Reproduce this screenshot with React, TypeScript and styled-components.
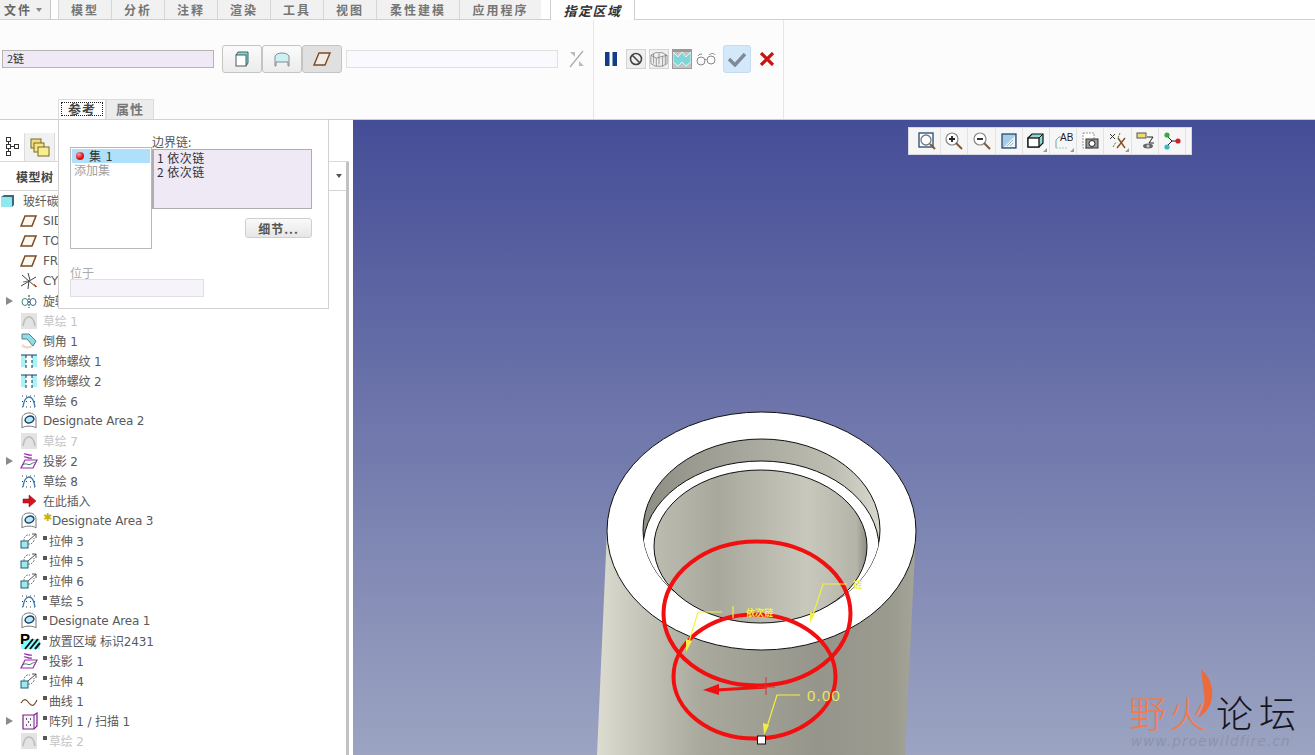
import React from "react";
import styled, { createGlobalStyle } from "styled-components";

const Global = createGlobalStyle`
  html, body { margin: 0; padding: 0; width: 1315px; height: 755px; overflow: hidden; background: #fff; }
  * { box-sizing: border-box; }
  body { font-family: "DejaVu Sans", "Noto Sans CJK SC", sans-serif; font-size: 12px; color: #555; }
`;

const Page = styled.div`
  position: relative;
  width: 1315px;
  height: 755px;
  display: flex;
  flex-direction: column;
  overflow: hidden;
`;

const TabBar = styled.div`
  height: 20px;
  display: flex;
  align-items: stretch;
  background: #fff;
  border-bottom: 1px solid #cfcfcf;
`;
const FileTab = styled.div`
  width: 51px;
  display: flex;
  align-items: center;
  justify-content: flex-start;
  gap: 4px;
  padding-left: 4px;
  background: #f1f1f1;
  border-right: 1px solid #c8c8c8;
  font: bold 12px "Noto Sans CJK SC", sans-serif;
  letter-spacing: 2px;
  color: #666;
  margin-right: 7px;
  &::after {
    content: "";
    border-left: 3px solid transparent;
    border-right: 3px solid transparent;
    border-top: 4px solid #888;
  }
`;
const Tab = styled.div<{ $w: number }>`
  width: ${(p) => p.$w}px;
  display: flex;
  align-items: center;
  justify-content: center;
  background: #f1f1f1;
  border-left: 1px solid #d6d6d6;
  font: bold 12px "Noto Sans CJK SC", sans-serif;
  letter-spacing: 2px;
  color: #757575;
  &:last-of-type { border-right: 1px solid #c8c8c8; }
`;
const ActiveTab = styled.div`
  width: 85px;
  height: 20px;
  margin-left: 9px;
  display: flex;
  align-items: center;
  justify-content: center;
  background: #fff;
  border-left: 1px solid #cfcfcf;
  border-right: 1px solid #cfcfcf;
  font: italic bold 13px "Noto Sans CJK SC", sans-serif;
  letter-spacing: 1.5px;
  color: #333;
`;

const Ribbon = styled.div`
  height: 100px;
  display: flex;
  background: #fcfcfc;
  border-bottom: 1px solid #cdcdcd;
`;
const MainGroup = styled.div`
  width: 594px;
  display: flex;
  flex-direction: column;
  justify-content: space-between;
  border-right: 1px solid #e6e6e6;
`;
const Controls = styled.div`
  height: 53px;
  padding: 25px 0 0 2px;
  display: flex;
  align-items: center;
`;
const ChainInput = styled.div`
  width: 212px;
  height: 18px;
  background: #efe9f6;
  border: 1px solid #b4b4b4;
  font: 11px "Noto Sans CJK SC", sans-serif;
  line-height: 15px;
  padding-left: 4px;
  color: #333;
  margin-right: 8px;
`;
const ToggleGroup = styled.div`
  display: flex;
  margin-right: 4px;
`;
const ToggleButton = styled.div<{ $on?: boolean }>`
  width: 40px;
  height: 28px;
  display: flex;
  align-items: center;
  justify-content: center;
  border: 1px solid #c4c4c4;
  border-radius: 3px;
  background: ${(p) => (p.$on ? "#e0e0e0" : "linear-gradient(#fbfbfb, #ececec)")};
`;
const EmptyInput = styled.div`
  width: 212px;
  height: 18px;
  background: #faf9fd;
  border: 1px solid #e0e0e0;
  margin-right: 10px;
`;
const SubTabs = styled.div`
  display: flex;
  margin-left: 58px;
  height: 20px;
`;
const SubTab = styled.div<{ $on?: boolean }>`
  width: 48px;
  padding-bottom: 3px;
  display: flex;
  align-items: center;
  justify-content: center;
  border: 1px solid #dcdcdc;
  border-bottom: 0;
  background: ${(p) => (p.$on ? "#fff" : "#ececec")};
  font: bold 13px "Noto Sans CJK SC", sans-serif;
  letter-spacing: 1px;
  color: ${(p) => (p.$on ? "#444" : "#777")};
`;
const FocusLabel = styled.span`
  width: 42px;
  height: 14px;
  margin-top: 2px;
  border: 1px dotted #222;
  line-height: 12px;
  text-align: center;
  display: block;
`;
const ActionGroup = styled.div`
  width: 190px;
  padding: 25px 0 47px 11px;
  display: flex;
  align-items: center;
  gap: 3px;
  border-right: 1px solid #e6e6e6;
`;
const ActionBox = styled.div<{ $pressed?: boolean; $plain?: boolean; $w?: number; $gap?: number }>`
  width: ${(p) => p.$w ?? 20}px;
  height: 20px;
  margin-left: ${(p) => p.$gap ?? 0}px;
  display: flex;
  align-items: center;
  justify-content: center;
  border: ${(p) => (p.$plain ? "0" : p.$pressed ? "1px solid #9a9a9a" : "1px solid #d4d4d4")};
  border-top-width: ${(p) => (p.$pressed ? 3 : p.$plain ? 0 : 1)}px;
  background: ${(p) => (p.$pressed ? "#c4c4c4" : p.$plain ? "transparent" : "#efefef")};
`;
const OkButton = styled.div`
  width: 28px;
  height: 28px;
  margin: 0 5px 0 3px;
  flex: none;
  display: flex;
  align-items: center;
  justify-content: center;
  border: 1px solid #c3dcef;
  border-radius: 3px;
  background: #d3e8f8;
`;

const Main = styled.div`
  height: 635px;
  display: flex;
`;
const TreePanel = styled.div`
  width: 353px;
  display: flex;
  flex-direction: column;
  background: #fff;
`;
const NavTabs = styled.div`
  height: 42px;
  margin-right: 4px;
  padding-top: 13px;
  display: flex;
  align-items: stretch;
  background: #fff;
  border-bottom: 1px solid #dadada;
`;
const NavTab = styled.div<{ $on?: boolean }>`
  width: ${(p) => (p.$on ? 25 : 30)}px;
  display: flex;
  align-items: center;
  justify-content: center;
  background: ${(p) => (p.$on ? "#fff" : "#f1f1f1")};
  border-right: 1px solid #dadada;
`;
const TreeBody = styled.div`
  flex: 1;
  display: flex;
  min-height: 0;
`;
const TreeColumn = styled.div`
  width: 346px;
  display: flex;
  flex-direction: column;
  min-width: 0;
`;
const TreeHeader = styled.div`
  height: 29px;
  padding-left: 16px;
  display: flex;
  align-items: center;
  justify-content: space-between;
  border-bottom: 1px solid #d4d4d4;
  font: bold 12px "Noto Sans CJK SC", sans-serif;
  letter-spacing: 0.5px;
  color: #444;
`;
const HeaderMenu = styled.span`
  width: 0;
  height: 0;
  margin-right: 4px;
  border-left: 3px solid transparent;
  border-right: 3px solid transparent;
  border-top: 4px solid #555;
`;
const Rows = styled.div`
  display: flex;
  flex-direction: column;
`;
const Row = styled.div<{ $off?: boolean }>`
  height: 20px;
  display: flex;
  align-items: center;
  white-space: nowrap;
  color: ${(p) => (p.$off ? "#c4c4c4" : "#5a5a5a")};
  font-size: 12px;
  letter-spacing: -0.15px;
`;
const Label = styled.span<{ $cjk: boolean }>`
  padding-bottom: ${(p) => (p.$cjk ? 2 : 0)}px;
`;
const Expand = styled.span<{ $show?: boolean }>`
  width: 20px;
  padding-left: 6px;
  flex: none;
  &::before {
    content: "";
    display: ${(p) => (p.$show ? "block" : "none")};
    width: 0;
    height: 0;
    border-top: 4px solid transparent;
    border-bottom: 4px solid transparent;
    border-left: 7px solid #8a8a8a;
  }
`;
const RowIcon = styled.span`
  width: 23px;
  flex: none;
  display: flex;
  align-items: center;
`;
const Star = styled.span`
  width: 9px;
  flex: none;
  align-self: flex-start;
  margin-top: 1px;
  font-size: 11px;
  line-height: 11px;
  color: #c8b400;
`;
const Mark = styled.span`
  width: 6px;
  flex: none;
  align-self: flex-start;
  margin-top: 5px;
  &::before {
    content: "";
    display: block;
    width: 4px;
    height: 4px;
    background: #555;
  }
`;
const Scroll = styled.div`
  width: 3px;
  background: #c2c2c2;
`;

const Viewport = styled.div`
  position: relative;
  flex: 1;
  background: linear-gradient(#454d97, #9ca4c2);
  overflow: hidden;
`;
const Scene = styled.svg`
  position: absolute;
  inset: 0;
  width: 962px;
  height: 635px;
`;
const ViewBar = styled.div`
  position: absolute;
  left: 555px;
  top: 7px;
  width: 284px;
  height: 28px;
  display: flex;
  align-items: center;
  padding: 0 5px;
  background: #f6f6f6;
  border: 1px solid #d8d8e2;
`;
const ViewCell = styled.div<{ $corner?: boolean }>`
  position: relative;
  width: 27.3px;
  height: 26px;
  display: flex;
  align-items: center;
  justify-content: center;
  border-right: 1px solid #e2e2e2;
  &::after {
    content: "";
    display: ${(p) => (p.$corner ? "block" : "none")};
    position: absolute;
    right: 2px;
    bottom: 2px;
    border-left: 4px solid transparent;
    border-bottom: 4px solid #999;
  }
`;
const Watermark = styled.div`
  position: absolute;
  left: 776px;
  top: 572px;
  width: 185px;
  font-family: "Noto Sans CJK SC", sans-serif;
  font-size: 37px;
  line-height: 40px;
  letter-spacing: 3px;
  white-space: nowrap;
`;
const Fire = styled.span`
  color: #f27a4c;
  font-weight: 300;
`;
const Forum = styled.span`
  color: #15151c;
  margin-left: 7px;
  letter-spacing: 6px;
  font-weight: 300;
`;
const Flame = styled.svg`
  position: absolute;
  left: 64px;
  top: -23px;
  width: 22px;
  height: 50px;
`;
const Site = styled.div`
  font: italic 13.5px "DejaVu Sans", sans-serif;
  letter-spacing: 1.2px;
  line-height: 16px;
  margin: 1px 0 0 2px;
  color: #8c92ac;
`;

const Popup = styled.div`
  position: absolute;
  left: 58px;
  top: 119px;
  width: 271px;
  height: 190px;
  padding: 16px 16px 0 11px;
  background: #fff;
  border: 1px solid #d2d2d2;
  font-family: "Noto Sans CJK SC", sans-serif;
`;
const PopTop = styled.div`
  display: flex;
`;
const SetList = styled.div`
  width: 82px;
  height: 102px;
  margin-top: 11px;
  padding: 1px 1px;
  border: 1px solid #b8b8b8;
  background: #fff;
`;
const SetRow = styled.div`
  height: 14px;
  padding-left: 4px;
  display: flex;
  align-items: center;
  gap: 5px;
  background: #aee0fb;
  color: #333;
  font-size: 12px;
  line-height: 14px;
  letter-spacing: 1px;
`;
const AddSet = styled.div`
  padding-left: 2px;
  line-height: 14px;
  color: #a0a0a0;
  font-size: 12px;
`;
const RedDot = styled.span`
  width: 8px;
  height: 8px;
  border-radius: 50%;
  background: radial-gradient(circle at 35% 30%, #ff9a9a, #d40f0f 60%);
`;
const ChainColumn = styled.div`
  flex: 1;
  display: flex;
  flex-direction: column;
`;
const ChainLabel = styled.div`
  height: 13px;
  line-height: 12px;
  font-size: 12px;
  color: #555;
`;
const ChainBox = styled.div`
  height: 60px;
  padding: 1px 0 0 3px;
  margin-bottom: 9px;
  background: #efe9f6;
  border: 1px solid #aeaeae;
  border-left-width: 2px;
  font-size: 12px;
  line-height: 14px;
  letter-spacing: 0.5px;
  color: #333;
`;
const DetailButton = styled.div`
  width: 67px;
  height: 20px;
  align-self: flex-end;
  display: flex;
  align-items: center;
  justify-content: center;
  background: linear-gradient(#fafafa, #e6e6e6);
  border: 1px solid #cfcfcf;
  border-radius: 3px;
  font-weight: bold;
  font-size: 12px;
  letter-spacing: 1px;
  color: #555;
`;
const AtLabel = styled.div`
  margin-top: 17px;
  height: 13px;
  line-height: 14px;
  color: #aaa;
  font-size: 12px;
`;
const AtInput = styled.div`
  width: 134px;
  height: 18px;
  background: #f6f4fa;
  border: 1px solid #e0e0e0;
`;

type IconName = "plane" | "csys" | "revolve" | "sketchOff" | "chamfer" | "thread" | "sketch" | "area" | "project" | "insert" | "extrude" | "place" | "curve" | "pattern";

const TreeIcon = ({ name }: { name: IconName }) => {
  const s = { width: 18, height: 18, viewBox: "0 0 18 18", fill: "none" } as const;
  switch (name) {
    case "plane":
      return <svg {...s}><path d="M5 4h11l-4 10H1z" stroke="#7a4a24" strokeWidth="1.5" fill="#fdf8ef" /></svg>;
    case "csys":
      return <svg {...s}><path d="M8 1l2 7M2 3l14 12M1 14l15-9M9 8l-1 9" stroke="#444" strokeWidth="1" /><path d="M8 9l-5 1M14 12l3 3" stroke="#c0572a" strokeWidth="1" /></svg>;
    case "revolve":
      return <svg {...s}><ellipse cx="5" cy="10" rx="3" ry="3.5" stroke="#3a8a7e" /><ellipse cx="13" cy="10" rx="3" ry="3.5" stroke="#3a6a9a" /><path d="M9 3v13" stroke="#222" strokeDasharray="2 1" /></svg>;
    case "sketchOff":
      return <svg {...s}><rect x="1" y="1" width="16" height="16" fill="#e3e3e3" /><path d="M3 14c1-7 3-9 6-9s5 2 6 9" stroke="#bcbcbc" strokeWidth="1.5" /></svg>;
    case "chamfer":
      return <svg {...s}><path d="M2 2h7l7 7-3 5-6-7H2z" fill="#8fdde8" stroke="#5a7f8a" /><path d="M2 13c3 3 7 3 10 1" stroke="#eadccc" strokeWidth="2.5" /></svg>;
    case "thread":
      return <svg {...s}><rect x="1" y="3" width="16" height="12" fill="#a8f2f8" /><rect x="6" y="3" width="6" height="12" fill="#fff" /><path d="M1 3h16" stroke="#1d3d66" /><path d="M6 3v13M12 3v13" stroke="#1d2d4d" strokeDasharray="3 2" /></svg>;
    case "sketch":
      return <svg {...s}><path d="M2 4h14M2 9.500h14M2 15h14" stroke="#445" strokeDasharray="1 3" /><path d="M3 15c1-7 3-10 6-10s5 3 6 10" stroke="#2a7ab8" strokeWidth="1.3" /></svg>;
    case "area":
      return <svg {...s}><path d="M2 16V7c0-4 3-6 7-6s7 2 7 6v9" stroke="#777" fill="#fff" /><path d="M2 16c2-2.500 12-2.500 14 0" stroke="#777" /><ellipse cx="9.500" cy="7.500" rx="4.500" ry="3.300" transform="rotate(-20 9.500 7.500)" stroke="#17406e" strokeWidth="1.5" fill="#b8e8f2" /></svg>;
    case "project":
      return <svg {...s}><path d="M5 8h12l-4 8H1z" stroke="#9a2ab0" strokeWidth="1.2" fill="#fff" /><path d="M3 13c3-3 5 1 8-1s3-1 4-2" stroke="#3a7a5a" /><path d="M4 2c2-1 4 2 8 1M4 5c2-1 4 2 8 1" stroke="#9a2ab0" strokeWidth="1.2" /></svg>;
    case "insert":
      return <svg {...s}><path d="M3 7h6V3l7 6-7 6v-4H3z" fill="#d8121a" stroke="#7a0a10" strokeWidth=".5" /></svg>;
    case "extrude":
      return <svg {...s}><rect x="1" y="9" width="7" height="7" fill="#9fe8ee" stroke="#1f5f7a" /><path d="M4 9V6l3-3h3M8 12h3l3-3V6" stroke="#777" strokeDasharray="2 1" /><path d="M8 9l8-7M12 2h4v4" stroke="#555" /></svg>;
    case "place":
      return <svg width="22" height="20" viewBox="0 0 22 20" fill="none"><rect x="1" y="8" width="19" height="10" fill="#8ff" /><path d="M5 18l8-10M10 18l8-10M15 18l5-6" stroke="#111" strokeWidth="2" /><text x="0" y="13" fontFamily="Liberation Sans" fontWeight="bold" fontSize="15" fill="#000">P</text></svg>;
    case "curve":
      return <svg {...s}><path d="M1 11c3-5 5-4 8 0s5 3 8-3" stroke="#7a4a24" strokeWidth="1.2" /></svg>;
    case "pattern":
      return <svg {...s}><path d="M3 3h11l3-2v13l-3 3H3z" stroke="#7a1f8a" strokeWidth="1.2" fill="#f8f4fb" /><path d="M14 3v14" stroke="#7a1f8a" /><path d="M6 7h1M10 7h1M8 10h1M6 13h1M10 13h1" stroke="#333" strokeWidth="1.4" /></svg>;
  }
};

type Item = { icon: IconName; label: string; expand?: boolean; off?: boolean; mark?: boolean; star?: boolean };
const items: Item[] = [
  { icon: "plane", label: "SIDE" },
  { icon: "plane", label: "TOP" },
  { icon: "plane", label: "FRONT" },
  { icon: "csys", label: "CYS" },
  { icon: "revolve", label: "旋转 1", expand: true },
  { icon: "sketchOff", label: "草绘 1", off: true },
  { icon: "chamfer", label: "倒角 1" },
  { icon: "thread", label: "修饰螺纹 1" },
  { icon: "thread", label: "修饰螺纹 2" },
  { icon: "sketch", label: "草绘 6" },
  { icon: "area", label: "Designate Area 2" },
  { icon: "sketchOff", label: "草绘 7", off: true },
  { icon: "project", label: "投影 2", expand: true },
  { icon: "sketch", label: "草绘 8" },
  { icon: "insert", label: "在此插入" },
  { icon: "area", label: "Designate Area 3", star: true },
  { icon: "extrude", label: "拉伸 3", mark: true },
  { icon: "extrude", label: "拉伸 5", mark: true },
  { icon: "extrude", label: "拉伸 6", mark: true },
  { icon: "sketch", label: "草绘 5", mark: true },
  { icon: "area", label: "Designate Area 1", mark: true },
  { icon: "place", label: "放置区域 标识2431", mark: true },
  { icon: "project", label: "投影 1", mark: true },
  { icon: "extrude", label: "拉伸 4", mark: true },
  { icon: "curve", label: "曲线 1", mark: true },
  { icon: "pattern", label: "阵列 1 / 扫描 1", mark: true, expand: true },
  { icon: "sketchOff", label: "草绘 2", mark: true, off: true },
];

const tabs: [string, number][] = [
  ["模型", 53], ["分析", 53], ["注释", 53], ["渲染", 53], ["工具", 53], ["视图", 53], ["柔性建模", 83], ["应用程序", 82],
];

const V = { width: 20, height: 20, viewBox: "0 0 20 20", fill: "none" } as const;
const viewIcons: { node: React.ReactNode; corner?: boolean }[] = [
  { node: <svg {...V}><rect x="2" y="2" width="14" height="14" stroke="#1d4a6e" strokeWidth="1.3" fill="#fff" /><circle cx="9" cy="9" r="5" stroke="#777" strokeWidth="1.3" /><path d="M13 13l5 5" stroke="#7a5a3a" strokeWidth="2" /></svg> },
  { node: <svg {...V}><circle cx="8" cy="8" r="6" stroke="#888" strokeWidth="1.2" fill="#fff" /><path d="M5 8h6M8 5v6" stroke="#222" strokeWidth="1.8" /><path d="M12 12l6 6" stroke="#7a5a3a" strokeWidth="2" /></svg> },
  { node: <svg {...V}><circle cx="8" cy="8" r="6" stroke="#888" strokeWidth="1.2" fill="#fff" /><path d="M5 8h6" stroke="#222" strokeWidth="1.8" /><path d="M12 12l6 6" stroke="#7a5a3a" strokeWidth="2" /></svg> },
  { node: <svg {...V}><rect x="3" y="3" width="14" height="14" fill="#a8cce8" stroke="#16406a" strokeWidth="1.2" /><path d="M5 16L16 5v11z" fill="#e8f2fa" /><path d="M8 15l6-6M11 15l3-3" stroke="#8aa" strokeWidth=".8" /></svg> },
  { node: <svg {...V}><path d="M2 7l4-4h11v9l-4 4H2z" fill="#8fd8d0" stroke="#111" strokeWidth="1.2" /><rect x="2" y="7" width="11" height="9" fill="#fff" stroke="#111" strokeWidth="1.3" /><path d="M13 7l4-4" stroke="#111" /></svg>, corner: true },
  { node: <svg {...V}><path d="M3 17V9l3-3h2" stroke="#6aa" fill="none" /><path d="M3 17h12" stroke="#9cc" strokeDasharray="2 1" /><text x="7" y="10" fontFamily="Liberation Sans" fontSize="10" fill="#222">AB</text></svg>, corner: true },
  { node: <svg {...V}><rect x="3" y="2" width="11" height="15" stroke="#999" strokeDasharray="2 1" fill="#fff" /><rect x="6" y="8" width="12" height="9" fill="#999" stroke="#333" /><circle cx="12" cy="12.500" r="3" fill="#fff" stroke="#222" /></svg> },
  { node: <svg {...V}><path d="M2 3l5 5M7 3L2 8" stroke="#333" /><path d="M12 2l-2 5M5 16l3-5" stroke="#3a8a3a" strokeDasharray="2 1" /><path d="M10 7l7 10M17 7l-8 10" stroke="#8a4a1a" strokeWidth="1.4" /></svg>, corner: true },
  { node: <svg {...V}><rect x="2" y="2" width="9" height="5" fill="#eedc70" stroke="#555" /><path d="M12 6h6l-4 6h5" stroke="#222" /><ellipse cx="13" cy="15" rx="5" ry="2.500" fill="#666" /><circle cx="13" cy="15" r="1.500" fill="#ccc" /></svg> },
  { node: <svg {...V}><path d="M5 5l5 5h7M10 10l-5 5" stroke="#222" /><circle cx="5" cy="4" r="2.600" fill="#3aa84a" /><circle cx="16" cy="10" r="2.600" fill="#d02030" /><circle cx="5" cy="16" r="2.600" fill="#38b8c8" /></svg> },
];

const Yellow = "#f4f040";
const RingRed = "#f20f0f";

export default function App() {
  return (
    <Page>
      <Global />
      <TabBar>
        <FileTab>文件</FileTab>
        {tabs.map(([t, w]) => <Tab key={t} $w={w}>{t}</Tab>)}
        <ActiveTab>指定区域</ActiveTab>
      </TabBar>
      <Ribbon>
        <MainGroup>
          <Controls>
            <ChainInput>2链</ChainInput>
            <ToggleGroup>
              <ToggleButton>
                <svg width="18" height="18" viewBox="0 0 18 18" fill="none"><path d="M3 5l2-3h10v11l-2 3z" fill="#7fd8cc" stroke="#3a6a72" /><rect x="3" y="5" width="10" height="11" fill="#fff" stroke="#4a5a62" /></svg>
              </ToggleButton>
              <ToggleButton>
                <svg width="18" height="18" viewBox="0 0 18 18" fill="none"><path d="M2 16V6c2-4 12-4 14 0v10h-1V12H3v4z" fill="#cdf0f2" stroke="#889" /></svg>
              </ToggleButton>
              <ToggleButton $on>
                <svg width="20" height="18" viewBox="0 0 20 18" fill="none"><path d="M7 3h11l-5 12H2z" stroke="#7a4a24" strokeWidth="1.400" fill="#f2ece4" /></svg>
              </ToggleButton>
            </ToggleGroup>
            <EmptyInput />
            <svg width="18" height="20" viewBox="0 0 18 20" fill="none"><path d="M15 2L2 18" stroke="#aaa" strokeWidth="1.200" /><path d="M2 3h5v5zM16 17h-5v-5z" fill="#bbb" /></svg>
          </Controls>
          <SubTabs>
            <SubTab $on><FocusLabel>参考</FocusLabel></SubTab>
            <SubTab>属性</SubTab>
          </SubTabs>
        </MainGroup>
        <ActionGroup>
          <ActionBox $plain $w={12}>
            <svg width="12" height="14" viewBox="0 0 12 14"><rect width="4.500" height="14" fill="#123c86" /><rect x="7.500" width="4.500" height="14" fill="#123c86" /></svg>
          </ActionBox>
          <ActionBox $gap={6}>
            <svg width="16" height="16" viewBox="0 0 16 16" fill="none"><circle cx="8" cy="8" r="5.500" stroke="#444" strokeWidth="1.600" /><path d="M4 4l8 8" stroke="#444" strokeWidth="1.600" /></svg>
          </ActionBox>
          <ActionBox>
            <svg width="20" height="18" viewBox="0 0 20 18" fill="none" stroke="#777" strokeWidth=".8"><path d="M1 5l5-3 8 0 5 3v9l-5 3H6l-5-3zM1 5l6 3v9M7 8l7-2 5-1M14 6v11M10 3v12M4 3v11M17 4v11" /></svg>
          </ActionBox>
          <ActionBox $pressed>
            <svg width="18" height="15" viewBox="0 0 18 15"><path d="M0 0l5 5 4-5 4 5 5-5v10l-5 4-4-4-4 4-5-4z" fill="#7fd6d8" stroke="#f4ffff" strokeWidth=".8" /></svg>
          </ActionBox>
          <ActionBox $plain $w={22}>
            <svg width="22" height="14" viewBox="0 0 22 14" fill="none" stroke="#888"><circle cx="6" cy="9" r="4" /><circle cx="16" cy="8" r="4" /><path d="M10 8c1-1 1-1 2 0M3 4c1-2 3-2 4-2M14 3c2-2 5-2 6 0" /></svg>
          </ActionBox>
          <OkButton>
            <svg width="20" height="16" viewBox="0 0 20 16" fill="none"><path d="M2 8l6 6L18 3" stroke="#7e8a96" strokeWidth="3.400" /></svg>
          </OkButton>
          <ActionBox $plain $w={16}>
            <svg width="16" height="14" viewBox="0 0 16 14" fill="none"><path d="M2 1l12 12M14 1L2 13" stroke="#c8160e" strokeWidth="3.200" /></svg>
          </ActionBox>
        </ActionGroup>
      </Ribbon>
      <Main>
        <TreePanel>
          <NavTabs>
            <NavTab $on>
              <svg width="16" height="22" viewBox="0 0 16 22" fill="none" stroke="#333"><rect x="2.500" y="1.500" width="4" height="4" /><rect x="2.500" y="8.500" width="4" height="4" /><rect x="2.500" y="15.500" width="4" height="4" /><rect x="10.500" y="8.500" width="4" height="4" /><path d="M4.500 5.500v3M4.500 12.500v3M6.500 10.500h4" /></svg>
            </NavTab>
            <NavTab>
              <svg width="20" height="20" viewBox="0 0 20 20" stroke="#7a6a20"><rect x="1" y="2" width="10" height="9" fill="#f0dc80" /><rect x="4" y="6" width="10" height="9" fill="#f5e68a" /><rect x="8" y="10" width="11" height="9" fill="#f8ee90" /></svg>
            </NavTab>
          </NavTabs>
          <TreeBody>
            <TreeColumn>
              <TreeHeader>模型树<HeaderMenu /></TreeHeader>
              <Rows>
                <Row>
                  <RowIcon>
                    <svg width="16" height="16" viewBox="0 0 16 16"><path d="M1 4l3-2h10v10l-2 2z" fill="#3a6a7a" /><rect x="1" y="4" width="11" height="10" rx="1" fill="#8ee8f0" /></svg>
                  </RowIcon>
                  <Label $cjk>玻纤碳纤维</Label>
                </Row>
                {items.map((it, i) => (
                  <Row key={i} $off={it.off}>
                    <Expand $show={it.expand} />
                    <RowIcon><TreeIcon name={it.icon} /></RowIcon>
                    {it.star && <Star>✱</Star>}
                    {it.mark && <Mark />}
                    <Label $cjk={/[^\x00-\x7f]/.test(it.label)}>{it.label}</Label>
                  </Row>
                ))}
              </Rows>
            </TreeColumn>
            <Scroll />
          </TreeBody>
        </TreePanel>
        <Viewport>
          <Scene viewBox="353 120 962 635" fill="none">
            <defs>
              <linearGradient id="body" x1="597" x2="916" y1="0" y2="0" gradientUnits="userSpaceOnUse">
                <stop offset="0" stopColor="#dcdcd0" />
                <stop offset=".12" stopColor="#c8c8bc" />
                <stop offset=".33" stopColor="#a8a89c" />
                <stop offset=".7" stopColor="#95958b" />
                <stop offset=".93" stopColor="#9b9b90" />
                <stop offset="1" stopColor="#a5a59a" />
              </linearGradient>
              <linearGradient id="wall" x1="643" x2="880" y1="0" y2="0" gradientUnits="userSpaceOnUse">
                <stop offset="0" stopColor="#8e8e84" />
                <stop offset=".4" stopColor="#a5a59b" />
                <stop offset=".8" stopColor="#bdbdb2" />
                <stop offset="1" stopColor="#d8d8ce" />
              </linearGradient>
              <linearGradient id="hole" x1="654" x2="867" y1="0" y2="0" gradientUnits="userSpaceOnUse">
                <stop offset="0" stopColor="#bcbcb1" />
                <stop offset=".3" stopColor="#a8a89d" />
                <stop offset=".72" stopColor="#c8c8bd" />
                <stop offset=".95" stopColor="#b4b4a9" />
                <stop offset="1" stopColor="#8c8c84" />
              </linearGradient>
              <clipPath id="boreClip"><ellipse cx="761.500" cy="530" rx="118.500" ry="91" /></clipPath>
            </defs>
            <path d="M607 530L597 755H905L916 530z" fill="url(#body)" />
            <ellipse cx="761.500" cy="531" rx="154.500" ry="119" fill="#fff" stroke="#111" strokeWidth="1" />
            <ellipse cx="761.500" cy="530" rx="118.500" ry="91" fill="url(#wall)" stroke="#111" />
            <ellipse cx="761" cy="548" rx="118" ry="87" fill="#fff" stroke="#111" clipPath="url(#boreClip)" />
            <ellipse cx="760.500" cy="546.500" rx="106.500" ry="76.500" fill="url(#hole)" stroke="#111" />
            <ellipse cx="757" cy="613.500" rx="93.500" ry="72" stroke={RingRed} strokeWidth="4" />
            <ellipse cx="754.500" cy="676.500" rx="81" ry="62" stroke={RingRed} strokeWidth="4" />
            <path d="M767 687L716 690" stroke="#ee1111" strokeWidth="3" />
            <path d="M703 690l16-6v11z" fill="#ee1111" />
            <path d="M766 677v18M757 687h18" stroke="#e03030" strokeWidth="1" />
            <g stroke={Yellow} strokeWidth="1.200">
              <path d="M800 695H777L766 730" />
              <path d="M722 612H698L688 645" />
              <path d="M847 584H823L812 618" />
              <path d="M733 606v12" />
            </g>
            <g fill={Yellow}>
              <path d="M764 735l-1-12 6 2z" />
              <path d="M686 652l0-13 6 2z" />
              <path d="M810 623l0-11 5 2z" />
            </g>
            <text x="807" y="701" fill="#e8e860" fontFamily="Liberation Sans" fontSize="15" letterSpacing="1.2">0.00</text>
            <text x="746" y="616" fill={Yellow} fontFamily="Noto Sans CJK SC" fontWeight="bold" fontSize="9">依次链</text>
            <text x="853" y="588" fill={Yellow} fontFamily="Noto Sans CJK SC" fontWeight="bold" fontSize="9">链</text>
            <rect x="757.500" y="736" width="8" height="8" fill="#fff" stroke="#111" />
          </Scene>
          <ViewBar>
            {viewIcons.map((ic, i) => <ViewCell key={i} $corner={ic.corner}>{ic.node}</ViewCell>)}
          </ViewBar>
          <Watermark>
            <Flame viewBox="0 0 22 50" fill="none"><path d="M8 0c9 8 14 20 10 33-2 7-7 12-13 16 4-8 8-14 6-24C10 16 9 8 8 0z" fill="#ee6a3a" /></Flame>
            <Fire>野火</Fire><Forum>论坛</Forum>
            <Site>www.proewildfire.cn</Site>
          </Watermark>
        </Viewport>
      </Main>
      <Popup>
        <PopTop>
          <SetList>
            <SetRow><RedDot />集 1</SetRow>
            <AddSet>添加集</AddSet>
          </SetList>
          <ChainColumn>
            <ChainLabel>边界链:</ChainLabel>
            <ChainBox>1 依次链<br />2 依次链</ChainBox>
            <DetailButton>细节...</DetailButton>
          </ChainColumn>
        </PopTop>
        <AtLabel>位于</AtLabel>
        <AtInput />
      </Popup>
    </Page>
  );
}
